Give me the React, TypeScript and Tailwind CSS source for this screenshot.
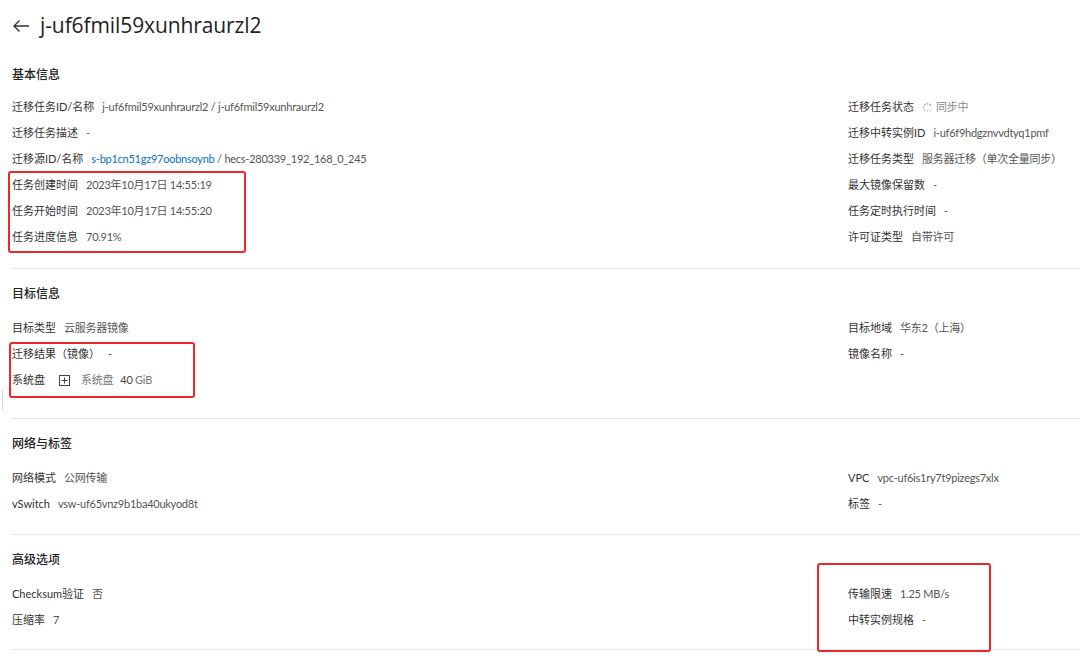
import React from "react";

type Item = { label: string; value: React.ReactNode };

const font = { fontFamily: '"Lato", "Noto Sans CJK SC", sans-serif' };
const titleFont = { fontFamily: '"Open Sans", "Noto Sans CJK SC", sans-serif' };

function Spinner() {
  const dots = Array.from({ length: 8 });
  return (
    <svg width="11" height="11" viewBox="0 0 12 12" className="mr-[3px]">
      {dots.map((_, i) => {
        const a = (i / 8) * Math.PI * 2;
        const x = 6 + Math.cos(a) * 4.2;
        const y = 6 + Math.sin(a) * 4.2;
        return <circle key={i} cx={x} cy={y} r={1.1} fill="#9aa3ad" opacity={0.3 + (i / 8) * 0.7} />;
      })}
    </svg>
  );
}

function PlusBox() {
  return (
    <svg width="11" height="11" viewBox="0 0 11 11" className="ml-[6px] mr-[11px]">
      <rect x="0.5" y="0.5" width="10" height="10" fill="none" stroke="#444" strokeWidth="1" />
      <path d="M5.5 2.5v6M2.5 5.5h6" stroke="#444" strokeWidth="1" />
    </svg>
  );
}

function Row({ item }: { item: Item }) {
  return (
    <div className="flex h-[26px] items-center text-[11px] whitespace-nowrap">
      <span className="text-[#333] mr-[8px]">{item.label}</span>
      <span className="text-[#555] flex items-center tracking-[-0.25px]">{item.value}</span>
    </div>
  );
}

function Section({
  title,
  left,
  right,
  pt,
  gap,
  pb,
}: {
  title: string;
  left: Item[];
  right: Item[];
  pt: string;
  gap: string;
  pb: string;
}) {
  return (
    <div className={`border-b border-[#e8e8e8] ${pt} ${pb}`}>
      <div className={`h-[18px] flex items-center text-[12px] font-medium text-[#222] ${gap}`}>{title}</div>
      <div className="grid grid-cols-[836px_1fr]">
        <div>
          {left.map((it, i) => (
            <Row key={i} item={it} />
          ))}
        </div>
        <div>
          {right.map((it, i) => (
            <Row key={i} item={it} />
          ))}
        </div>
      </div>
    </div>
  );
}

export default function App() {
  return (
    <div className="relative w-[1080px] h-[668px] bg-white overflow-hidden" style={font}>
      <div className="pl-3">
        <div className="h-[52px] flex items-center">
          <svg width="18" height="14" viewBox="0 0 18 14" className="mr-[10px]">
            <path d="M17 7H2M7.5 1.5L2 7l5.5 5.5" fill="none" stroke="#333" strokeWidth="1.4" />
          </svg>
          <span className="text-[21px] text-[#222] tracking-[-0.1px]" style={titleFont}>
            j-uf6fmil59xunhraurzl2
          </span>
        </div>

        <Section
          title="基本信息"
          pt="pt-[14px]"
          gap="mb-[10px]"
          pb="pb-[18px]"
          left={[
            { label: "迁移任务ID/名称", value: "j-uf6fmil59xunhraurzl2 / j-uf6fmil59xunhraurzl2" },
            { label: "迁移任务描述", value: "-" },
            {
              label: "迁移源ID/名称",
              value: (
                <>
                  <span className="text-[#0a6fd1]">s-bp1cn51gz97oobnsoynb</span>
                  <span>&nbsp;/ hecs-280339_192_168_0_245</span>
                </>
              ),
            },
            { label: "任务创建时间", value: "2023年10月17日 14:55:19" },
            { label: "任务开始时间", value: "2023年10月17日 14:55:20" },
            { label: "任务进度信息", value: "70.91%" },
          ]}
          right={[
            {
              label: "迁移任务状态",
              value: (
                <>
                  <Spinner />
                  <span className="text-[#888]">同步中</span>
                </>
              ),
            },
            { label: "迁移中转实例ID", value: "i-uf6f9hdgznvvdtyq1pmf" },
            { label: "迁移任务类型", value: "服务器迁移（单次全量同步）" },
            { label: "最大镜像保留数", value: "-" },
            { label: "任务定时执行时间", value: "-" },
            { label: "许可证类型", value: "自带许可" },
          ]}
        />

        <Section
          title="目标信息"
          pt="pt-[16px]"
          gap="mb-[12px]"
          pb="pb-[25px]"
          left={[
            { label: "目标类型", value: "云服务器镜像" },
            { label: "迁移结果（镜像）", value: "-" },
            {
              label: "系统盘",
              value: (
                <>
                  <PlusBox />
                  <span className="text-[#777] mr-[7px]">系统盘</span>
                  <span className="text-[#444]">40</span>
                  <span className="text-[#777]">&nbsp;GiB</span>
                </>
              ),
            },
          ]}
          right={[
            { label: "目标地域", value: "华东2（上海）" },
            { label: "镜像名称", value: "-" },
          ]}
        />

        <Section
          title="网络与标签"
          pt="pt-[16px]"
          gap="mb-[12px]"
          pb="pb-[17px]"
          left={[
            { label: "网络模式", value: "公网传输" },
            { label: "vSwitch", value: "vsw-uf65vnz9b1ba40ukyod8t" },
          ]}
          right={[
            { label: "VPC", value: "vpc-uf6is1ry7t9pizegs7xlx" },
            { label: "标签", value: "-" },
          ]}
        />

        <Section
          title="高级选项"
          pt="pt-[16px]"
          gap="mb-[12px]"
          pb="pb-[16px]"
          left={[
            { label: "Checksum验证", value: "否" },
            { label: "压缩率", value: "7" },
          ]}
          right={[
            { label: "传输限速", value: "1.25 MB/s" },
            { label: "中转实例规格", value: "-" },
          ]}
        />
      </div>

      {/* annotation boxes */}
      <div className="absolute left-[8px] top-[171px] w-[238px] h-[82px] border-2 border-[#ea2a2a] rounded-[3px]" />
      <div className="absolute left-[9px] top-[342px] w-[186px] h-[56px] border-2 border-[#ea2a2a] rounded-[3px]" />
      <div className="absolute left-[817px] top-[563px] w-[174px] h-[89px] border-2 border-[#ea2a2a] rounded-[3px]" />
      <div className="absolute left-[2px] top-[390px] w-px h-[20px] bg-[#d8d8d8]" />
    </div>
  );
}
